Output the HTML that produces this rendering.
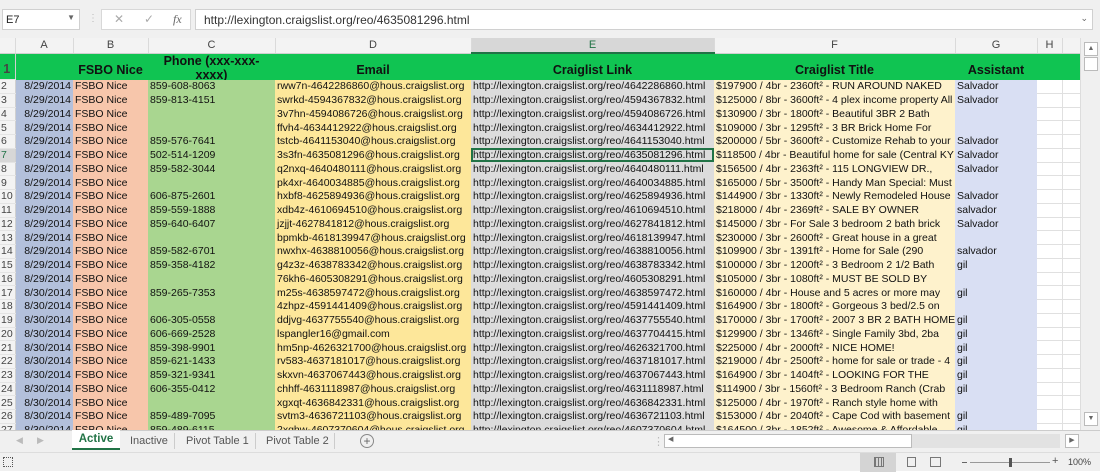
<!DOCTYPE html>
<html><head><meta charset="utf-8"><style>
*{margin:0;padding:0;box-sizing:border-box}
body{width:1100px;height:471px;overflow:hidden;background:#fff;font-family:"Liberation Sans",Arial,sans-serif;position:relative}
.abs{position:absolute}
#top{left:0;top:0;width:1100px;height:38px;background:#f0f0f0}
#namebox{left:2px;top:9px;width:78px;height:21px;background:#fff;border:1px solid #d0d0d0;font-size:11px;padding:4px 3px;color:#222}
#fbtn{left:101px;top:9px;width:90px;height:21px;background:#fff;border:1px solid #d8d8d8;color:#aaa;font-size:12px}
#fbar{left:195px;top:9px;width:898px;height:21px;background:#fff;border:1px solid #d0d0d0;font-size:12px;padding:3px 8px;color:#333}
#grid{position:absolute;left:0;top:38px;width:1080px;height:392px;overflow:hidden}
table{width:1080px;border-collapse:collapse;table-layout:fixed;font-size:10.5px;color:#111}
td{overflow:hidden;white-space:nowrap;height:13.75px;line-height:12px;padding:0 2px}
tr.ch td{height:15px;background:#f3f3f3;color:#444;text-align:center;font-size:11px;border-right:1px solid #dadada;border-bottom:1px solid #d0d0d0}
tr.ch td.sel{background:#d7d7d7;border-bottom:2px solid #217346;color:#217346}
tr.h1 td{height:26px;background:#10c452;font-weight:bold;font-size:12.5px;text-align:center;vertical-align:bottom;padding-bottom:4px}
td.rh{background:#f3f3f3;color:#444;text-align:left;font-size:10.5px;padding-left:1px;border-right:1px solid #d0d0d0;border-bottom:1px solid #e4e4e4;font-weight:normal}
td.rh.s{background:#d7d7d7;color:#217346}
.a{background:#b3c0db;text-align:right}
.b{background:#f7c6ab}
.c{background:#a9d690}
.d{background:#fde79a}
.e{background:#dcdcdc}
.f{background:#fef2cc}
.g{background:#d9dff3}
.w{background:#fff;border-right:1px solid #e0e0e0;border-bottom:1px solid #e0e0e0}
.sele{outline:2px solid #217346;outline-offset:-2px}
#vs{left:1080px;top:38px;width:20px;height:392px;background:#f0f0f0;border-left:1px solid #ddd}
#tabs{left:0;top:430px;width:1100px;height:22px;background:#f0f0f0;border-top:1px solid #ccc;font-size:11px;color:#555}
#status{left:0;top:452px;width:1100px;height:19px;background:#f0f0f0;border-top:1px solid #ddd}
</style></head><body>
<div id="top" class="abs"></div>
<div id="namebox" class="abs">E7<span style="position:absolute;right:4px;top:3px;font-size:8px;color:#666">▼</span></div>
<div class="abs" style="left:88px;top:13px;color:#bbb;font-size:10px">⋮</div>
<div id="fbtn" class="abs"><span style="position:absolute;left:12px;top:2px">✕</span><span style="position:absolute;left:42px;top:2px">✓</span><span style="position:absolute;left:71px;top:2px;color:#666;font-style:italic;font-family:'Liberation Serif',serif">fx</span></div>
<div id="fbar" class="abs">http://lexington.craigslist.org/reo/4635081296.html<span style="position:absolute;right:4px;top:3px;font-size:9px;color:#666">⌄</span></div>

<div id="grid">
<table>
<colgroup><col style="width:15px"><col style="width:58px"><col style="width:75px"><col style="width:127px"><col style="width:196px"><col style="width:243px"><col style="width:241px"><col style="width:82px"><col style="width:25px"><col style="width:18px"></colgroup>
<tr class="ch"><td style="background:#f3f3f3"></td><td>A</td><td>B</td><td>C</td><td>D</td><td class="sel">E</td><td>F</td><td>G</td><td>H</td><td></td></tr>
<tr class="h1"><td class="rh" style="vertical-align:bottom">1</td><td></td><td>FSBO Nice</td><td style="line-height:14px;padding:0;vertical-align:top;overflow:hidden"><div style="height:26px;overflow:hidden;padding-top:0">Phone (xxx-xxx-<br>xxxx)</div></td><td>Email</td><td>Craiglist Link</td><td>Craiglist Title</td><td>Assistant</td><td></td><td></td></tr>
<tr><td class="rh">2</td><td class="a">8/29/2014</td><td class="b">FSBO Nice</td><td class="c">859-608-8063</td><td class="d">rww7n-4642286860@hous.craigslist.org</td><td class="e">http://lexington.craigslist.org/reo/4642286860.html</td><td class="f">$197900 / 4br - 2360ft² - RUN AROUND NAKED</td><td class="g">Salvador</td><td class="w"></td><td class="w"></td></tr>
<tr><td class="rh">3</td><td class="a">8/29/2014</td><td class="b">FSBO Nice</td><td class="c">859-813-4151</td><td class="d">swrkd-4594367832@hous.craigslist.org</td><td class="e">http://lexington.craigslist.org/reo/4594367832.html</td><td class="f">$125000 / 8br - 3600ft² - 4 plex income property All</td><td class="g">Salvador</td><td class="w"></td><td class="w"></td></tr>
<tr><td class="rh">4</td><td class="a">8/29/2014</td><td class="b">FSBO Nice</td><td class="c"></td><td class="d">3v7hn-4594086726@hous.craigslist.org</td><td class="e">http://lexington.craigslist.org/reo/4594086726.html</td><td class="f">$130900 / 3br - 1800ft² - Beautiful 3BR 2 Bath</td><td class="g"></td><td class="w"></td><td class="w"></td></tr>
<tr><td class="rh">5</td><td class="a">8/29/2014</td><td class="b">FSBO Nice</td><td class="c"></td><td class="d">ffvh4-4634412922@hous.craigslist.org</td><td class="e">http://lexington.craigslist.org/reo/4634412922.html</td><td class="f">$109000 / 3br - 1295ft² - 3 BR Brick Home For</td><td class="g"></td><td class="w"></td><td class="w"></td></tr>
<tr><td class="rh">6</td><td class="a">8/29/2014</td><td class="b">FSBO Nice</td><td class="c">859-576-7641</td><td class="d">tstcb-4641153040@hous.craigslist.org</td><td class="e">http://lexington.craigslist.org/reo/4641153040.html</td><td class="f">$200000 / 5br - 3600ft² - Customize Rehab to your</td><td class="g">Salvador</td><td class="w"></td><td class="w"></td></tr>
<tr><td class="rh s">7</td><td class="a">8/29/2014</td><td class="b">FSBO Nice</td><td class="c">502-514-1209</td><td class="d">3s3fn-4635081296@hous.craigslist.org</td><td class="e sele">http://lexington.craigslist.org/reo/4635081296.html</td><td class="f">$118500 / 4br - Beautiful home for sale (Central KY</td><td class="g">Salvador</td><td class="w"></td><td class="w"></td></tr>
<tr><td class="rh">8</td><td class="a">8/29/2014</td><td class="b">FSBO Nice</td><td class="c">859-582-3044</td><td class="d">q2nxq-4640480111@hous.craigslist.org</td><td class="e">http://lexington.craigslist.org/reo/4640480111.html</td><td class="f">$156500 / 4br - 2363ft² - 115 LONGVIEW DR.,</td><td class="g">Salvador</td><td class="w"></td><td class="w"></td></tr>
<tr><td class="rh">9</td><td class="a">8/29/2014</td><td class="b">FSBO Nice</td><td class="c"></td><td class="d">pk4xr-4640034885@hous.craigslist.org</td><td class="e">http://lexington.craigslist.org/reo/4640034885.html</td><td class="f">$165000 / 5br - 3500ft² - Handy Man Special: Must</td><td class="g"></td><td class="w"></td><td class="w"></td></tr>
<tr><td class="rh">10</td><td class="a">8/29/2014</td><td class="b">FSBO Nice</td><td class="c">606-875-2601</td><td class="d">hxbf8-4625894936@hous.craigslist.org</td><td class="e">http://lexington.craigslist.org/reo/4625894936.html</td><td class="f">$144900 / 3br - 1330ft² - Newly Remodeled House</td><td class="g">Salvador</td><td class="w"></td><td class="w"></td></tr>
<tr><td class="rh">11</td><td class="a">8/29/2014</td><td class="b">FSBO Nice</td><td class="c">859-559-1888</td><td class="d">xdb4z-4610694510@hous.craigslist.org</td><td class="e">http://lexington.craigslist.org/reo/4610694510.html</td><td class="f">$218000 / 4br - 2369ft² - SALE BY OWNER</td><td class="g">salvador</td><td class="w"></td><td class="w"></td></tr>
<tr><td class="rh">12</td><td class="a">8/29/2014</td><td class="b">FSBO Nice</td><td class="c">859-640-6407</td><td class="d">jzjjt-4627841812@hous.craigslist.org</td><td class="e">http://lexington.craigslist.org/reo/4627841812.html</td><td class="f">$145000 / 3br - For Sale 3 bedroom 2 bath brick</td><td class="g">Salvador</td><td class="w"></td><td class="w"></td></tr>
<tr><td class="rh">13</td><td class="a">8/29/2014</td><td class="b">FSBO Nice</td><td class="c"></td><td class="d">bpmkb-4618139947@hous.craigslist.org</td><td class="e">http://lexington.craigslist.org/reo/4618139947.html</td><td class="f">$230000 / 3br - 2600ft² - Great house in a great</td><td class="g"></td><td class="w"></td><td class="w"></td></tr>
<tr><td class="rh">14</td><td class="a">8/29/2014</td><td class="b">FSBO Nice</td><td class="c">859-582-6701</td><td class="d">nwxhx-4638810056@hous.craigslist.org</td><td class="e">http://lexington.craigslist.org/reo/4638810056.html</td><td class="f">$109900 / 3br - 1391ft² - Home for Sale (290</td><td class="g">salvador</td><td class="w"></td><td class="w"></td></tr>
<tr><td class="rh">15</td><td class="a">8/29/2014</td><td class="b">FSBO Nice</td><td class="c">859-358-4182</td><td class="d">g4z3z-4638783342@hous.craigslist.org</td><td class="e">http://lexington.craigslist.org/reo/4638783342.html</td><td class="f">$100000 / 3br - 1200ft² - 3 Bedroom 2 1/2 Bath</td><td class="g">gil</td><td class="w"></td><td class="w"></td></tr>
<tr><td class="rh">16</td><td class="a">8/29/2014</td><td class="b">FSBO Nice</td><td class="c"></td><td class="d">76kh6-4605308291@hous.craigslist.org</td><td class="e">http://lexington.craigslist.org/reo/4605308291.html</td><td class="f">$105000 / 3br - 1080ft² - MUST BE SOLD BY</td><td class="g"></td><td class="w"></td><td class="w"></td></tr>
<tr><td class="rh">17</td><td class="a">8/30/2014</td><td class="b">FSBO Nice</td><td class="c">859-265-7353</td><td class="d">m25s-4638597472@hous.craigslist.org</td><td class="e">http://lexington.craigslist.org/reo/4638597472.html</td><td class="f">$160000 / 4br - House and 5 acres or more may</td><td class="g">gil</td><td class="w"></td><td class="w"></td></tr>
<tr><td class="rh">18</td><td class="a">8/30/2014</td><td class="b">FSBO Nice</td><td class="c"></td><td class="d">4zhpz-4591441409@hous.craigslist.org</td><td class="e">http://lexington.craigslist.org/reo/4591441409.html</td><td class="f">$164900 / 3br - 1800ft² - Gorgeous 3 bed/2.5 on</td><td class="g"></td><td class="w"></td><td class="w"></td></tr>
<tr><td class="rh">19</td><td class="a">8/30/2014</td><td class="b">FSBO Nice</td><td class="c">606-305-0558</td><td class="d">ddjvg-4637755540@hous.craigslist.org</td><td class="e">http://lexington.craigslist.org/reo/4637755540.html</td><td class="f">$170000 / 3br - 1700ft² - 2007 3 BR 2 BATH HOME</td><td class="g">gil</td><td class="w"></td><td class="w"></td></tr>
<tr><td class="rh">20</td><td class="a">8/30/2014</td><td class="b">FSBO Nice</td><td class="c">606-669-2528</td><td class="d">lspangler16@gmail.com</td><td class="e">http://lexington.craigslist.org/reo/4637704415.html</td><td class="f">$129900 / 3br - 1346ft² - Single Family 3bd, 2ba</td><td class="g">gil</td><td class="w"></td><td class="w"></td></tr>
<tr><td class="rh">21</td><td class="a">8/30/2014</td><td class="b">FSBO Nice</td><td class="c">859-398-9901</td><td class="d">hm5np-4626321700@hous.craigslist.org</td><td class="e">http://lexington.craigslist.org/reo/4626321700.html</td><td class="f">$225000 / 4br - 2000ft² - NICE HOME!</td><td class="g">gil</td><td class="w"></td><td class="w"></td></tr>
<tr><td class="rh">22</td><td class="a">8/30/2014</td><td class="b">FSBO Nice</td><td class="c">859-621-1433</td><td class="d">rv583-4637181017@hous.craigslist.org</td><td class="e">http://lexington.craigslist.org/reo/4637181017.html</td><td class="f">$219000 / 4br - 2500ft² - home for sale or trade - 4</td><td class="g">gil</td><td class="w"></td><td class="w"></td></tr>
<tr><td class="rh">23</td><td class="a">8/30/2014</td><td class="b">FSBO Nice</td><td class="c">859-321-9341</td><td class="d">skxvn-4637067443@hous.craigslist.org</td><td class="e">http://lexington.craigslist.org/reo/4637067443.html</td><td class="f">$164900 / 3br - 1404ft² - LOOKING FOR THE</td><td class="g">gil</td><td class="w"></td><td class="w"></td></tr>
<tr><td class="rh">24</td><td class="a">8/30/2014</td><td class="b">FSBO Nice</td><td class="c">606-355-0412</td><td class="d">chhff-4631118987@hous.craigslist.org</td><td class="e">http://lexington.craigslist.org/reo/4631118987.html</td><td class="f">$114900 / 3br - 1560ft² - 3 Bedroom Ranch (Crab</td><td class="g">gil</td><td class="w"></td><td class="w"></td></tr>
<tr><td class="rh">25</td><td class="a">8/30/2014</td><td class="b">FSBO Nice</td><td class="c"></td><td class="d">xgxqt-4636842331@hous.craigslist.org</td><td class="e">http://lexington.craigslist.org/reo/4636842331.html</td><td class="f">$125000 / 4br - 1970ft² - Ranch style home with</td><td class="g"></td><td class="w"></td><td class="w"></td></tr>
<tr><td class="rh">26</td><td class="a">8/30/2014</td><td class="b">FSBO Nice</td><td class="c">859-489-7095</td><td class="d">svtm3-4636721103@hous.craigslist.org</td><td class="e">http://lexington.craigslist.org/reo/4636721103.html</td><td class="f">$153000 / 4br - 2040ft² - Cape Cod with basement</td><td class="g">gil</td><td class="w"></td><td class="w"></td></tr>
<tr><td class="rh">27</td><td class="a">8/30/2014</td><td class="b">FSBO Nice</td><td class="c">859-489-6115</td><td class="d">2xqhw-4607370604@hous.craigslist.org</td><td class="e">http://lexington.craigslist.org/reo/4607370604.html</td><td class="f">$164500 / 3br - 1852ft² - Awesome &amp; Affordable</td><td class="g">gil</td><td class="w"></td><td class="w"></td></tr>
</table>
</div>

<div id="vs" class="abs">
  <div class="abs" style="left:3px;top:4px;width:14px;height:14px;background:#fff;border:1px solid #bbb;font-size:7px;text-align:center;line-height:12px;color:#666">▲</div>
  <div class="abs" style="left:3px;top:19px;width:14px;height:14px;background:#fff;border:1px solid #bbb"></div>
  <div class="abs" style="left:3px;top:374px;width:14px;height:14px;background:#fff;border:1px solid #bbb;font-size:7px;text-align:center;line-height:12px;color:#666">▼</div>
</div>

<div id="tabs" class="abs">
  <span class="abs" style="left:16px;top:4px;color:#bbb;font-size:9px">◀</span>
  <span class="abs" style="left:37px;top:4px;color:#bbb;font-size:9px">▶</span>
  <div class="abs" style="left:72px;top:-1px;width:48px;height:20px;background:#fff;border-bottom:2px solid #217346;color:#217346;font-weight:bold;font-size:11.5px;text-align:center;line-height:19px">Active</div>
  <span class="abs" style="left:130px;top:4px">Inactive</span>
  <span class="abs" style="left:174px;top:2px;width:1px;height:16px;background:#ccc"></span>
  <span class="abs" style="left:186px;top:4px">Pivot Table 1</span>
  <span class="abs" style="left:255px;top:2px;width:1px;height:16px;background:#ccc"></span>
  <span class="abs" style="left:266px;top:4px">Pivot Table 2</span>
  <span class="abs" style="left:334px;top:2px;width:1px;height:16px;background:#ccc"></span>
  <div class="abs" style="left:360px;top:3px;width:14px;height:14px;border:1px solid #888;border-radius:50%;text-align:center;line-height:12px;font-size:12px;color:#666">+</div>
  <span class="abs" style="left:653px;top:4px;color:#bbb">⋮</span>
  <div class="abs" style="left:664px;top:3px;width:248px;height:14px;background:#fff;border:1px solid #bbb"><span style="position:absolute;left:3px;top:0;font-size:7px;color:#666">◀</span></div>
  <div class="abs" style="left:912px;top:3px;width:148px;height:14px;background:#e2e2e2"></div>
  <div class="abs" style="left:1065px;top:3px;width:14px;height:14px;background:#fff;border:1px solid #bbb;font-size:7px;text-align:center;line-height:12px;color:#666">▶</div>
</div>

<div id="status" class="abs">
  <div class="abs" style="left:3px;top:4px;width:10px;height:10px;border:1px dotted #555"></div>
  <div class="abs" style="left:860px;top:0;width:36px;height:19px;background:#d4d4d4"></div>
  <div class="abs" style="left:874px;top:4px;width:10px;height:10px;border:1px solid #777;background:repeating-linear-gradient(90deg,#777 0 1px,transparent 1px 3px)"></div>
  <div class="abs" style="left:907px;top:4px;width:9px;height:10px;border:1px solid #777"></div>
  <div class="abs" style="left:930px;top:4px;width:11px;height:10px;border:1px solid #777"></div>
  <div class="abs" style="left:962px;top:9px;width:5px;height:1px;background:#666"></div>
  <div class="abs" style="left:970px;top:9px;width:80px;height:1px;background:#999"></div>
  <div class="abs" style="left:1009px;top:5px;width:3px;height:9px;background:#555"></div>
  <span class="abs" style="left:1052px;top:2px;font-size:11px;color:#555">+</span>
  <span class="abs" style="left:1068px;top:4px;font-size:9px;color:#444">100%</span>
</div>
</body></html>
